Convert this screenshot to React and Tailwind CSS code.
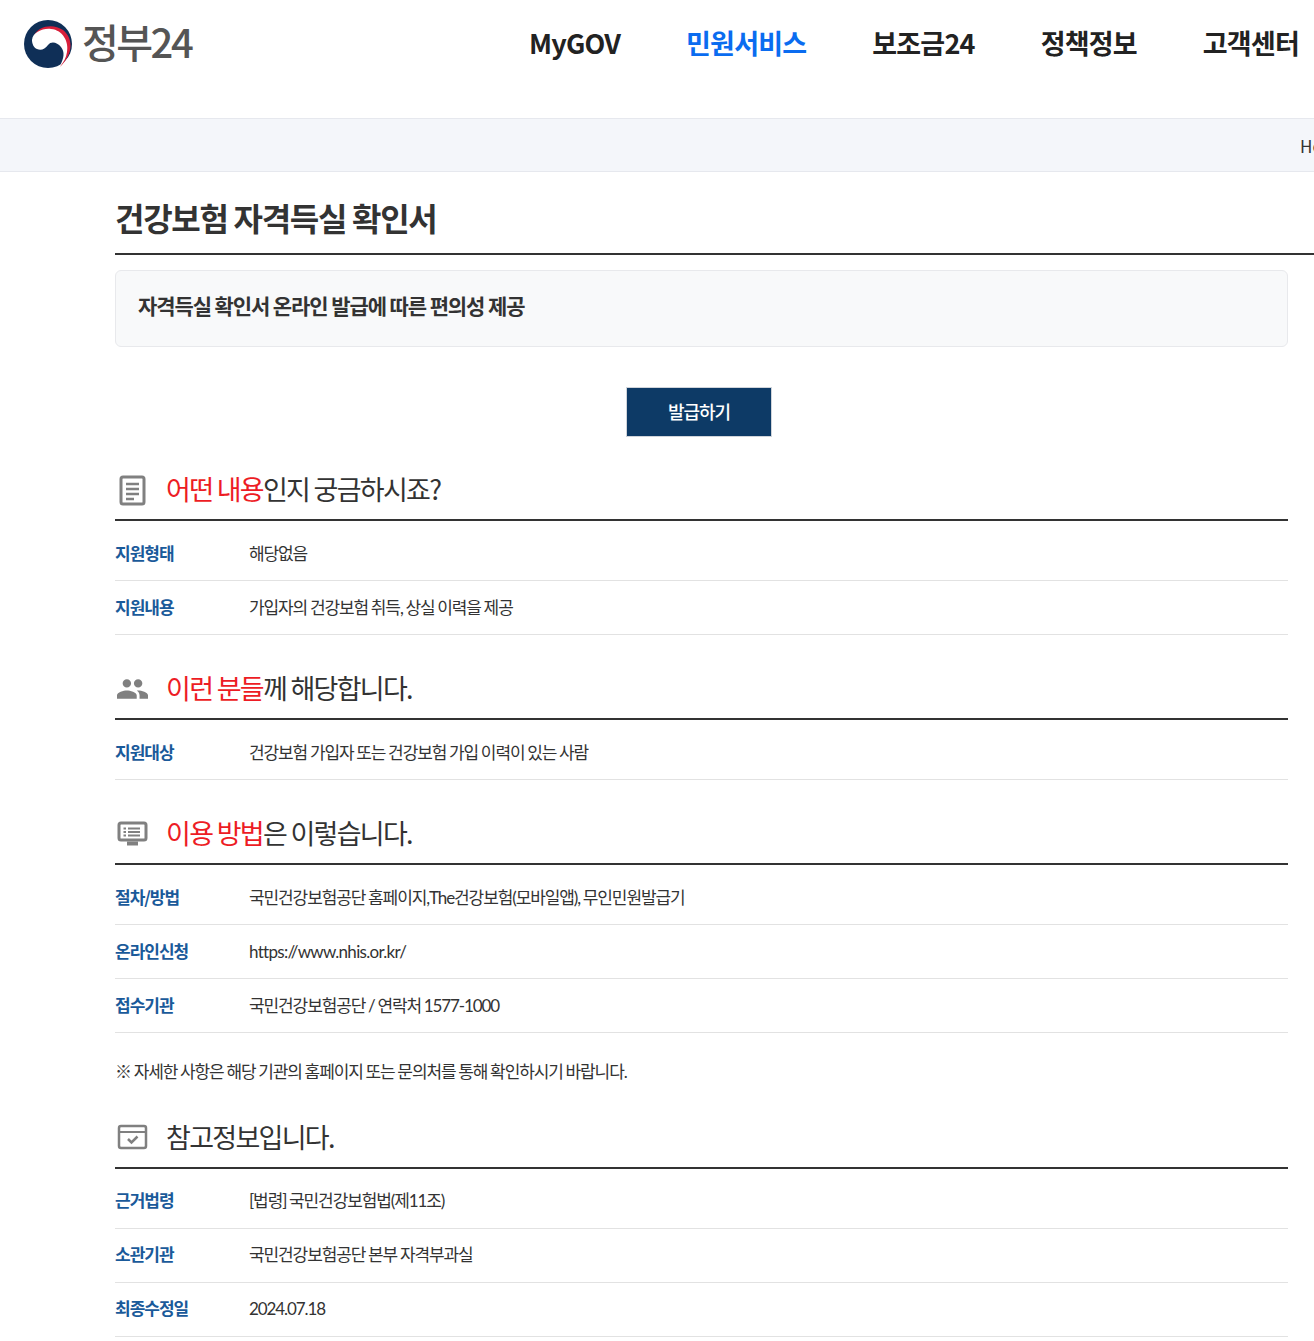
const FONT = "font-['Noto_Sans_CJK_KR','Noto_Sans_KR',sans-serif]";
const BODY_FONT = "font-['Lato','Noto_Sans_CJK_KR',sans-serif]";

const NAV = ["MyGOV", "민원서비스", "보조금24", "정책정보", "고객센터"];

function Logo() {
  return (
    <svg className="mt-[1px]" width="50" height="48" viewBox="0 0 50 48">
      <circle cx="25" cy="24" r="24" fill="#0f2f57" />
      <path d="M11 15C16 6 30 3 40 10C50 18 51 33 37 47C46 33 45 20 34 14C26 9 16 10 11 15Z" fill="#d81e3a" />
      <path d="M9 20C10 12 20 8 28 9C40 10 46 22 44 32C43 38 41 42 37 46C41 38 42 32 38 27C34 22 28 21 25 25C22 29 18 31 14 29C11 28 9 24 9 20Z" fill="#fff" />
    </svg>
  );
}

function SectionTitle({ icon, red, rest }) {
  return (
    <div className="flex items-center h-[51px] pb-[10px] border-b-2 border-[#333] pl-[2px] mb-[6px]">
      <span className="w-[49px] flex items-center">{icon}</span>
      <h3 className="text-[27px] font-normal tracking-[-1.7px] text-[#333]">
        {red && <span className="text-[#ed1c24]">{red}</span>}
        {rest}
      </h3>
    </div>
  );
}

function Row({ label, children }) {
  return (
    <div className="flex items-center h-[54px] border-b border-[#e2e2e2]">
      <span className="w-[134px] mb-[2px] text-[17px] font-bold tracking-[-1px] text-[#1a5a9a]">{label}</span>
      <span className={`${BODY_FONT} text-[17px] tracking-[-1.1px] [word-spacing:-0.5px] text-[#333]`}>{children}</span>
    </div>
  );
}

const DocIcon = (
  <svg width="30" height="32" viewBox="0 0 30 32" fill="none" stroke="#808080" strokeWidth="3">
    <rect x="4" y="3" width="23" height="27" rx="2" />
    <path d="M9 10h13M9 15h13M9 20h13M9 25h8" strokeWidth="2.500" />
  </svg>
);

const PeopleIcon = (
  <svg width="31" height="20" viewBox="1 5 22 14" fill="#808080">
    <path d="M16 11c1.660 0 2.990-1.340 2.990-3S17.660 5 16 5c-1.660 0-3 1.340-3 3s1.340 3 3 3zm-8 0c1.660 0 2.990-1.340 2.990-3S9.660 5 8 5C6.340 5 5 6.340 5 8s1.340 3 3 3zm0 2c-2.330 0-7 1.170-7 3.500V19h14v-2.500c0-2.330-4.670-3.500-7-3.500zm8 0c-.29 0-.62.02-.97.05 1.160.84 1.970 1.970 1.970 3.450V19h6v-2.500c0-2.330-4.670-3.500-7-3.500z" />
  </svg>
);

const MonitorIcon = (
  <svg width="31" height="25" viewBox="0 0 31 25" fill="none" stroke="#808080" strokeWidth="3">
    <rect x="2" y="2" width="27" height="17" rx="2" />
    <path d="M11 7.500h12M11 11h12M11 14.500h12M6.500 7.500h2.500M6.500 11h2.500M6.500 14.500h2.500" strokeWidth="2" />
    <path d="M10 22.500h11" strokeWidth="4" />
  </svg>
);

const CheckIcon = (
  <svg width="31" height="26" viewBox="0 0 31 26" fill="none" stroke="#808080" strokeWidth="2.500">
    <rect x="2" y="2" width="27" height="22" rx="2" />
    <path d="M2 8h27" strokeWidth="2" />
    <path d="M11 15l3.500 3.500 6-6" />
  </svg>
);

export default function App() {
  return (
    <div className={`${FONT} bg-white h-[1341px] overflow-hidden`}>
      <header className="flex items-start justify-between h-[118px] pl-[23px] pr-[15px] pt-[19px]">
        <div className="flex items-start gap-[9px]">
          <Logo />
          <span className="text-[40px] leading-[44px] font-medium tracking-[-2.500px] text-[#555]">정부24</span>
        </div>
        <nav className="flex gap-[66px] pt-[4px]">
          {NAV.map((item) => (
            <a key={item} className={`text-[27px] leading-[40px] font-bold tracking-[-0.8px] ${item === "민원서비스" ? "text-[#0a6cf0]" : "text-[#222]"}`}>
              {item}
            </a>
          ))}
        </nav>
      </header>

      <div className="h-[54px] pt-[1px] bg-[#f4f6fa] border-y border-[#e6e8ee] flex items-center justify-end overflow-hidden">
        <span className="text-[17px] text-[#333] w-[14px] whitespace-nowrap">Home</span>
      </div>

      <main className="pl-[115px] pr-[26px]">
        <h2 className="h-[83px] pt-[8px] mr-[-26px] border-b-2 border-[#333] flex items-center text-[32px] font-bold tracking-[-1.3px] text-[#333]">
          건강보험 자격득실 확인서
        </h2>

        <div className="mt-[15px] h-[77px] pb-[5px] flex items-center px-[22px] rounded-md bg-[#f8f9fa] border border-[#e8e9ec] text-[21px] font-bold tracking-[-1.1px] text-[#333]">
          자격득실 확인서 온라인 발급에 따른 편의성 제공
        </div>

        <div className="mt-[40px] flex justify-center pr-[5px]">
          <button className="w-[146px] h-[50px] pb-[1px] bg-[#0d3a66] border border-[#d0d4da] text-white text-[18px] font-medium tracking-[-1px]">발급하기</button>
        </div>

        <section className="mt-[33px]">
          <SectionTitle icon={DocIcon} red="어떤 내용" rest="인지 궁금하시죠?" />
          <Row label="지원형태">해당없음</Row>
          <Row label="지원내용">가입자의 건강보험 취득, 상실 이력을 제공</Row>
        </section>

        <section className="mt-[34px]">
          <SectionTitle icon={PeopleIcon} red="이런 분들" rest="께 해당합니다." />
          <Row label="지원대상">건강보험 가입자 또는 건강보험 가입 이력이 있는 사람</Row>
        </section>

        <section className="mt-[34px]">
          <SectionTitle icon={MonitorIcon} red="이용 방법" rest="은 이렇습니다." />
          <Row label="절차/방법">국민건강보험공단 홈페이지,The건강보험(모바일앱), 무인민원발급기</Row>
          <Row label="온라인신청"><span className="tracking-[-0.7px]">https://www.nhis.or.kr/</span></Row>
          <Row label="접수기관">국민건강보험공단 / 연락처 1577-1000</Row>
        </section>

        <p className={`${BODY_FONT} mt-[26px] text-[17px] tracking-[-1.1px] [word-spacing:-0.5px] text-[#333]`}>
          ※ 자세한 사항은 해당 기관의 홈페이지 또는 문의처를 통해 확인하시기 바랍니다.
        </p>

        <section className="mt-[33px]">
          <SectionTitle icon={CheckIcon} rest="참고정보입니다." />
          <Row label="근거법령">[법령] 국민건강보험법(제11조)</Row>
          <Row label="소관기관">국민건강보험공단 본부 자격부과실</Row>
          <Row label="최종수정일">2024.07.18</Row>
        </section>
      </main>
    </div>
  );
}
